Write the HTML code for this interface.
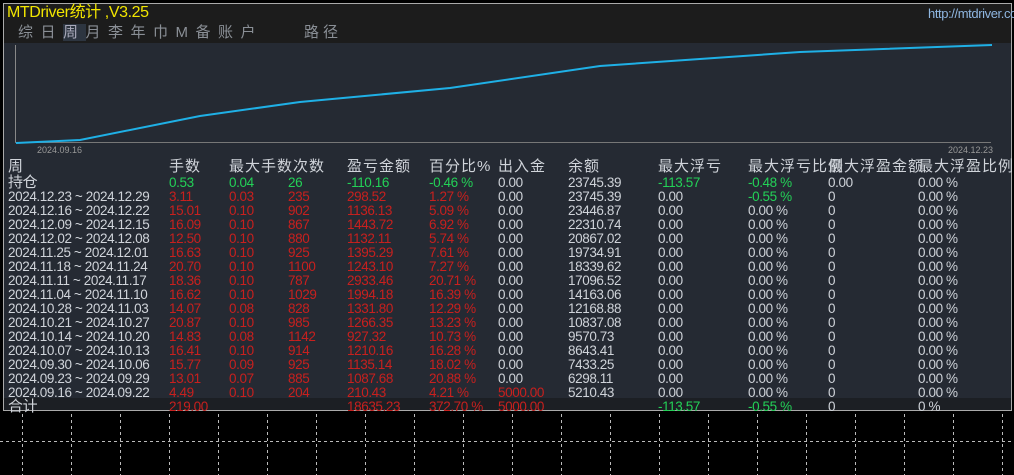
<!DOCTYPE html><html><head><meta charset="utf-8"><style>
body{margin:0;width:1014px;height:475px;background:#000;overflow:hidden;position:relative;font-family:"Liberation Sans","Noto Sans CJK SC",sans-serif;}
.p{position:absolute;left:3px;top:3px;width:1007px;height:406px;border:1px solid #aaa;background:#252a33;}
.hd{position:absolute;left:0;top:0;width:1007px;height:39px;background:#1c1c1c;}
.t{position:absolute;white-space:nowrap;font-size:13.5px;line-height:14px;letter-spacing:-0.4px;}
.w{color:#d0d4da}.r{color:#c8201e}.g{color:#23d157}.c{color:#cfd3d9}
.tot{position:absolute;left:0;top:394px;width:1007px;height:12px;background:#1c1f24;}
</style></head><body>
<div class="p">
<div class="hd"></div>
<div class="tot"></div>
</div>
<div class="t" style="left:7px;top:5px;color:#f2e600;font-size:16px;line-height:16px">MTDriver统计 ,V3.25</div>
<div class="t" style="left:928px;top:7px;color:#8fb6e0;font-size:13px">http://mtdriver.com</div>
<div class="t" style="left:18px;top:26px;color:#8a8f96;font-size:15px;letter-spacing:7.5px">综日<span style="background:#2d3540;color:#aab">周</span>月李年巾M备账户</div>
<div class="t" style="left:304px;top:26px;color:#8a8f96;font-size:15px;letter-spacing:4px">路径</div>
<svg style="position:absolute;left:0;top:0" width="1014" height="475">
<line x1="15.5" y1="45" x2="15.5" y2="143" stroke="#888"/>
<line x1="15" y1="142.5" x2="991" y2="142.5" stroke="#777"/>
<polyline points="16,143 80,140 200,116 300,102 450,88 600,66 800,52 992,45" fill="none" stroke="#1fb0e6" stroke-width="2"/>
<text x="37" y="153" fill="#999" font-size="9" font-family="Liberation Sans">2024.09.16</text>
<text x="948" y="153" fill="#999" font-size="9" font-family="Liberation Sans">2024.12.23</text>
<g stroke="#bbb" stroke-dasharray="3,3">
<line x1="0" y1="441.5" x2="1014" y2="441.5"/>
<line x1="22.5" y1="414" x2="22.5" y2="475"/><line x1="71.5" y1="414" x2="71.5" y2="475"/><line x1="120.5" y1="414" x2="120.5" y2="475"/><line x1="169.5" y1="414" x2="169.5" y2="475"/><line x1="218.5" y1="414" x2="218.5" y2="475"/><line x1="267.5" y1="414" x2="267.5" y2="475"/><line x1="316.5" y1="414" x2="316.5" y2="475"/><line x1="365.5" y1="414" x2="365.5" y2="475"/><line x1="414.5" y1="414" x2="414.5" y2="475"/><line x1="463.5" y1="414" x2="463.5" y2="475"/><line x1="512.5" y1="414" x2="512.5" y2="475"/><line x1="561.5" y1="414" x2="561.5" y2="475"/><line x1="610.5" y1="414" x2="610.5" y2="475"/><line x1="659.5" y1="414" x2="659.5" y2="475"/><line x1="708.5" y1="414" x2="708.5" y2="475"/><line x1="757.5" y1="414" x2="757.5" y2="475"/><line x1="806.5" y1="414" x2="806.5" y2="475"/><line x1="855.5" y1="414" x2="855.5" y2="475"/><line x1="904.5" y1="414" x2="904.5" y2="475"/><line x1="953.5" y1="414" x2="953.5" y2="475"/><line x1="1002.5" y1="414" x2="1002.5" y2="475"/>
</g>
</svg>
<div id="tb"></div>
<script>
var X=[8,169,229,288,347,429,498,568,658,748,828,918];
var H=[["周","w"],["手数","w"],["最大手数次数","w"],["",""],["盈亏金额","w"],["百分比%","w"],["出入金","w"],["余额","w"],["最大浮亏","w"],["最大浮亏比例","w"],["最大浮盈金额","w"],["最大浮盈比例","w"]];
var D=[
["持仓","g0.53","g0.04","g26","g-110.16","g-0.46 %","c0.00","c23745.39","g-113.57","g-0.48 %","c0.00","c0.00 %"],
["2024.12.23 ~ 2024.12.29","r3.11","r0.03","r235","r298.52","r1.27 %","c0.00","c23745.39","c0.00","g-0.55 %","c0","c0.00 %"],
["2024.12.16 ~ 2024.12.22","r15.01","r0.10","r902","r1136.13","r5.09 %","c0.00","c23446.87","c0.00","c0.00 %","c0","c0.00 %"],
["2024.12.09 ~ 2024.12.15","r16.09","r0.10","r867","r1443.72","r6.92 %","c0.00","c22310.74","c0.00","c0.00 %","c0","c0.00 %"],
["2024.12.02 ~ 2024.12.08","r12.50","r0.10","r880","r1132.11","r5.74 %","c0.00","c20867.02","c0.00","c0.00 %","c0","c0.00 %"],
["2024.11.25 ~ 2024.12.01","r16.63","r0.10","r925","r1395.29","r7.61 %","c0.00","c19734.91","c0.00","c0.00 %","c0","c0.00 %"],
["2024.11.18 ~ 2024.11.24","r20.70","r0.10","r1100","r1243.10","r7.27 %","c0.00","c18339.62","c0.00","c0.00 %","c0","c0.00 %"],
["2024.11.11 ~ 2024.11.17","r18.36","r0.10","r787","r2933.46","r20.71 %","c0.00","c17096.52","c0.00","c0.00 %","c0","c0.00 %"],
["2024.11.04 ~ 2024.11.10","r16.62","r0.10","r1029","r1994.18","r16.39 %","c0.00","c14163.06","c0.00","c0.00 %","c0","c0.00 %"],
["2024.10.28 ~ 2024.11.03","r14.07","r0.08","r828","r1331.80","r12.29 %","c0.00","c12168.88","c0.00","c0.00 %","c0","c0.00 %"],
["2024.10.21 ~ 2024.10.27","r20.87","r0.10","r985","r1266.35","r13.23 %","c0.00","c10837.08","c0.00","c0.00 %","c0","c0.00 %"],
["2024.10.14 ~ 2024.10.20","r14.83","r0.08","r1142","r927.32","r10.73 %","c0.00","c9570.73","c0.00","c0.00 %","c0","c0.00 %"],
["2024.10.07 ~ 2024.10.13","r16.41","r0.10","r914","r1210.16","r16.28 %","c0.00","c8643.41","c0.00","c0.00 %","c0","c0.00 %"],
["2024.09.30 ~ 2024.10.06","r15.77","r0.09","r925","r1135.14","r18.02 %","c0.00","c7433.25","c0.00","c0.00 %","c0","c0.00 %"],
["2024.09.23 ~ 2024.09.29","r13.01","r0.07","r885","r1087.68","r20.88 %","c0.00","c6298.11","c0.00","c0.00 %","c0","c0.00 %"],
["2024.09.16 ~ 2024.09.22","r4.49","r0.10","r204","r210.43","r4.21 %","r5000.00","c5210.43","c0.00","c0.00 %","c0","c0.00 %"],
["合计","r219.00","","","r18635.23","r372.70 %","r5000.00","","g-113.57","g-0.55 %","c0","c0 %"]];
var h="";
var HX=[8,169,229,0,347,429,498,568,658,748,828,918];
H.forEach(function(c,i){if(c[0])h+='<div class="t w" style="left:'+HX[i]+'px;top:160px;font-size:15px;letter-spacing:1px">'+c[0]+'</div>';});
D.forEach(function(r,j){var y=176+j*14;r.forEach(function(v,i){if(!v)return;var cls,txt;if(i==0){cls="w";txt=v;}else{cls=v[0];txt=v.slice(1);}
var fs=(i==0&&(j==0||j==16))?'font-size:15px;':'';
h+='<div class="t '+cls+'" style="left:'+X[i]+'px;top:'+y+'px;'+fs+'">'+txt+'</div>';});});
document.getElementById("tb").innerHTML=h;
</script>
</body></html>
